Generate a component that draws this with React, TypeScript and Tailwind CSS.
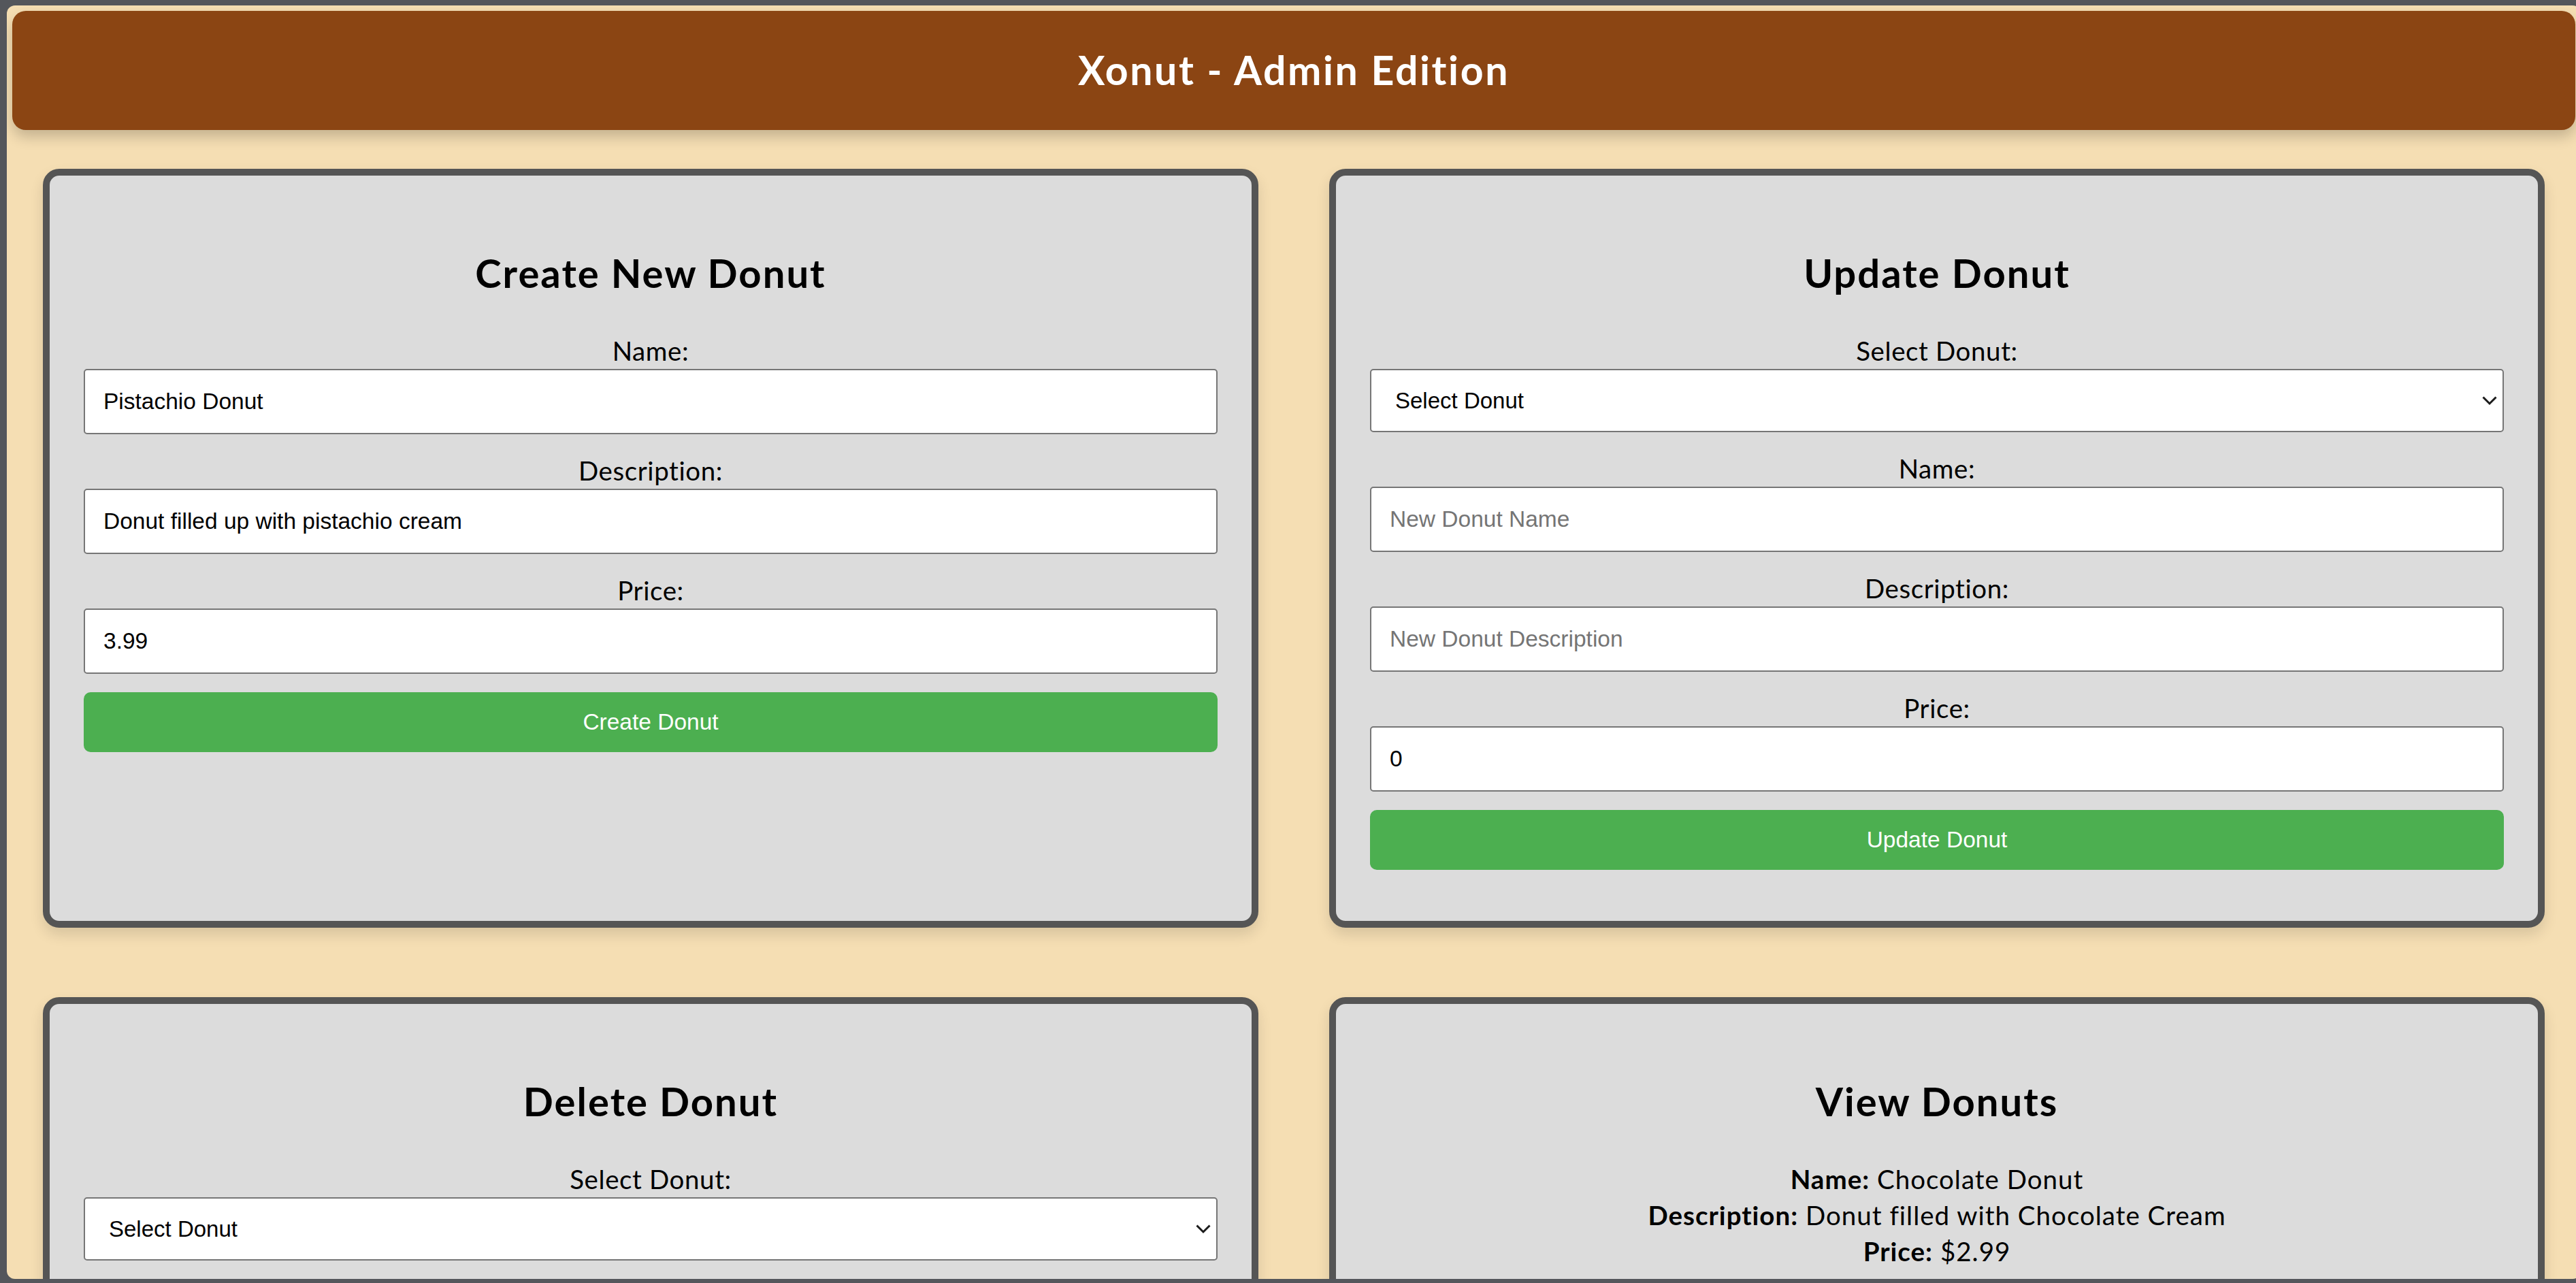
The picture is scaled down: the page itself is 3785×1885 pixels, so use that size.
import React from "react";

const inputCls =
  "block w-full h-[96px] rounded-[5px] border-2 border-[#767676] bg-white px-[27px] text-[33.5px] text-black placeholder:text-[#757575] font-['Liberation_Sans',Arial,sans-serif] outline-none";

function Label({ children }: { children: React.ReactNode }) {
  return (
    <label className="block h-[53px] text-[38.5px] leading-[53px] tracking-[0.6px] text-black">{children}</label>
  );
}

function DonutSelect() {
  return (
    <div className="relative">
      <select
        defaultValue=""
        className="block w-full h-[93px] appearance-none rounded-[5px] border-2 border-[#767676] bg-white pl-[35px] text-[33px] text-black font-['Liberation_Sans',Arial,sans-serif] outline-none"
      >
        <option value="">Select Donut</option>
        <option value="1">Chocolate Donut</option>
      </select>
      <svg
        className="pointer-events-none absolute right-[10px] top-[40px]"
        width="22"
        height="14"
        viewBox="0 0 22 14"
        fill="none"
      >
        <path d="M1.5 1.5 L11 11 L20.5 1.5" stroke="#1a1a1a" strokeWidth="3" />
      </svg>
    </div>
  );
}

function GreenButton({ children }: { children: React.ReactNode }) {
  return (
    <button className="block w-full h-[88px] rounded-[10px] bg-[#4caf50] text-[33.5px] text-white font-['Liberation_Sans',Arial,sans-serif]">
      {children}
    </button>
  );
}

function Card({ title, children }: { title: string; children: React.ReactNode }) {
  return (
    <section className="h-[1115px] rounded-[24px] border-[10px] border-[#555555] bg-[#dcdcdc] px-[50px] text-center shadow-[0_10px_20px_rgba(0,0,0,0.12)]">
      <h2 className="mt-[103px] text-[58px] font-bold leading-[79px] tracking-[2px] text-black">{title}</h2>
      <div className="mt-[49px]">{children}</div>
    </section>
  );
}

export default function App() {
  return (
    <div className="w-[3785px] h-[1885px] overflow-hidden bg-[#54565b] pt-[8px] pl-[10px]">
      <div className="w-[3782px] h-[1871px] overflow-hidden rounded-[12px] bg-[#f5deb3] pt-[8px] font-['Lato','Open_Sans',sans-serif]">
        {/* Header */}
        <header className="mx-[8px] flex h-[175px] items-center justify-center rounded-[20px] bg-[#8b4513] shadow-[0_10px_20px_rgba(0,0,0,0.2)]">
          <h1 className="text-[59px] font-bold tracking-[2.6px] text-white">Xonut - Admin Edition</h1>
        </header>

        <main className="mt-[57px] grid grid-cols-2 gap-x-[104px] gap-y-[102px] px-[53px]">
          <Card title="Create New Donut">
            <Label>Name:</Label>
            <input className={inputCls} defaultValue="Pistachio Donut" />
            <div className="mt-[27px]">
              <Label>Description:</Label>
              <input className={inputCls} defaultValue="Donut filled up with pistachio cream" />
            </div>
            <div className="mt-[27px]">
              <Label>Price:</Label>
              <input className={inputCls} defaultValue="3.99" />
            </div>
            <div className="mt-[27px]">
              <GreenButton>Create Donut</GreenButton>
            </div>
          </Card>

          <Card title="Update Donut">
            <Label>Select Donut:</Label>
            <DonutSelect />
            <div className="mt-[27px]">
              <Label>Name:</Label>
              <input className={inputCls} placeholder="New Donut Name" />
            </div>
            <div className="mt-[27px]">
              <Label>Description:</Label>
              <input className={inputCls} placeholder="New Donut Description" />
            </div>
            <div className="mt-[27px]">
              <Label>Price:</Label>
              <input className={inputCls} defaultValue="0" />
            </div>
            <div className="mt-[27px]">
              <GreenButton>Update Donut</GreenButton>
            </div>
          </Card>

          <Card title="Delete Donut">
            <Label>Select Donut:</Label>
            <DonutSelect />
            <div className="mt-[27px]">
              <GreenButton>Delete Donut</GreenButton>
            </div>
          </Card>

          <Card title="View Donuts">
            <div className="text-[38.5px] leading-[53px] tracking-[1px] text-black">
              <p>
                <strong className="font-bold">Name:</strong> Chocolate Donut
              </p>
              <p>
                <strong className="font-bold">Description:</strong> Donut filled with Chocolate Cream
              </p>
              <p>
                <strong className="font-bold">Price:</strong> $2.99
              </p>
            </div>
          </Card>
        </main>
      </div>
    </div>
  );
}
